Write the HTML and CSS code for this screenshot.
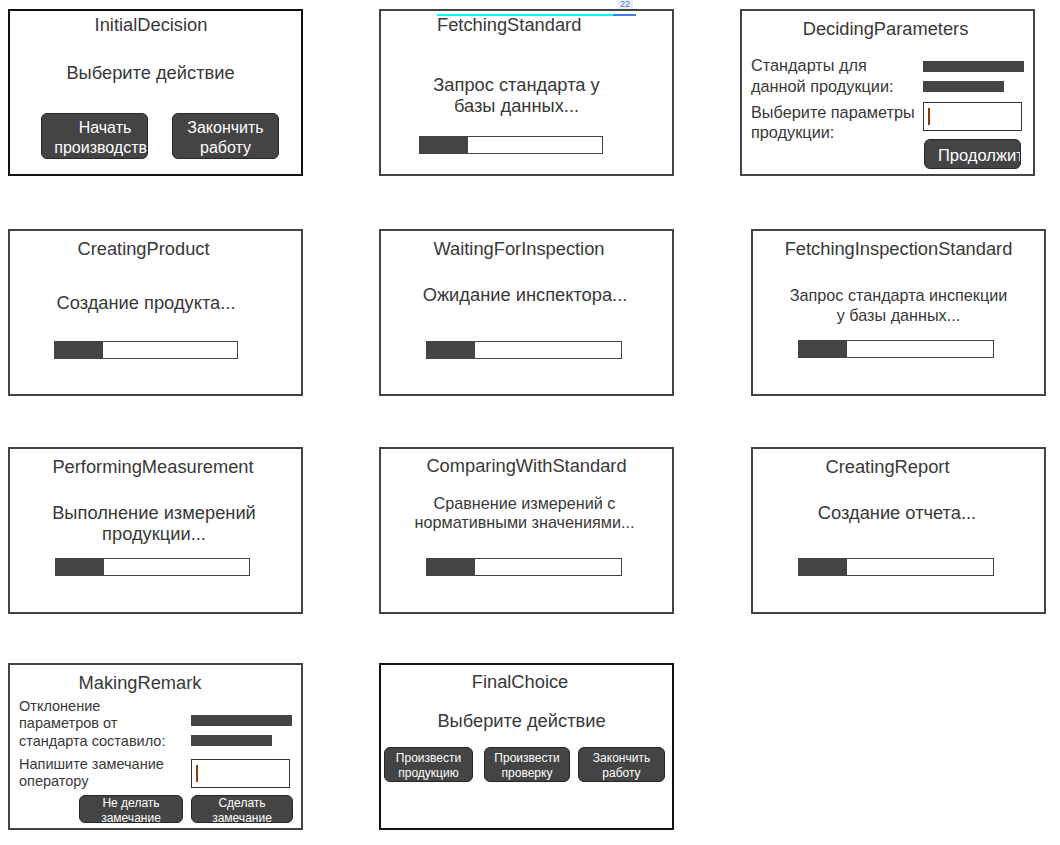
FILE: index.html
```html
<!DOCTYPE html>
<html lang="ru">
<head>
<meta charset="utf-8">
<title>States</title>
<link rel="stylesheet" href="styles.css">
</head>
<body>
<main class="board">
  <div class="row row-1">
    <section class="card card-dark c-initial">
      <h2 class="title">InitialDecision</h2>
      <p class="text">Выберите действие</p>
      <div class="btns">
        <div class="btn btn-lg"><span class="btn-wide">Начать<br>производство</span></div>
        <div class="btn btn-lg">Закончить<br>работу</div>
      </div>
    </section>
    <section class="card col-2 c-fetch">
      <div class="sel">
        <span class="badge">22</span>
        <h2 class="title">FetchingStandard</h2>
      </div>
      <p class="text">Запрос стандарта у<br>базы данных...</p>
      <div class="bar"><div class="fill"></div></div>
    </section>
    <section class="card col-3a c-params">
      <h2 class="title">DecidingParameters</h2>
      <div class="form">
        <div class="labels">
          <p class="label">Стандарты для<br>данной продукции:</p>
          <p class="label">Выберите параметры<br>продукции:</p>
        </div>
        <div class="fields">
          <div class="ph ph-long"></div>
          <div class="ph ph-short"></div>
          <div class="input"><span class="caret"></span></div>
          <div class="btn btn-cont">Продолжить</div>
        </div>
      </div>
    </section>
  </div>

  <div class="row row-2">
    <section class="card c-create">
      <h2 class="title">CreatingProduct</h2>
      <p class="text">Создание продукта...</p>
      <div class="bar"><div class="fill"></div></div>
    </section>
    <section class="card col-2 c-wait">
      <h2 class="title">WaitingForInspection</h2>
      <p class="text">Ожидание инспектора...</p>
      <div class="bar"><div class="fill"></div></div>
    </section>
    <section class="card col-3b c-fis">
      <h2 class="title">FetchingInspectionStandard</h2>
      <p class="text">Запрос стандарта инспекции<br>у базы данных...</p>
      <div class="bar"><div class="fill"></div></div>
    </section>
  </div>

  <div class="row row-3">
    <section class="card c-measure">
      <h2 class="title">PerformingMeasurement</h2>
      <p class="text">Выполнение измерений<br>продукции...</p>
      <div class="bar"><div class="fill"></div></div>
    </section>
    <section class="card col-2 c-compare">
      <h2 class="title">ComparingWithStandard</h2>
      <p class="text">Сравнение измерений с<br>нормативными значениями...</p>
      <div class="bar"><div class="fill"></div></div>
    </section>
    <section class="card col-3b c-report">
      <h2 class="title">CreatingReport</h2>
      <p class="text">Создание отчета...</p>
      <div class="bar"><div class="fill"></div></div>
    </section>
  </div>

  <div class="row row-4">
    <section class="card c-remark">
      <h2 class="title">MakingRemark</h2>
      <div class="form">
        <div class="labels">
          <p class="label">Отклонение<br>параметров от<br>стандарта составило:</p>
          <p class="label">Напишите замечание<br>оператору</p>
        </div>
        <div class="fields">
          <div class="ph ph-long"></div>
          <div class="ph ph-short"></div>
          <div class="input"><span class="caret"></span></div>
        </div>
      </div>
      <div class="btns">
        <div class="btn btn-sm btn-no">Не делать<br>замечание</div>
        <div class="btn btn-sm btn-yes">Сделать<br>замечание</div>
      </div>
    </section>
    <section class="card card-dark col-2 c-final">
      <h2 class="title">FinalChoice</h2>
      <p class="text">Выберите действие</p>
      <div class="btns">
        <div class="btn btn-f btn-f1">Произвести<br>продукцию</div>
        <div class="btn btn-f btn-f2">Произвести<br>проверку</div>
        <div class="btn btn-f btn-f3">Закончить<br>работу</div>
      </div>
    </section>
  </div>
</main>
</body>
</html>
```

FILE: styles.css
```css
html, body {
  margin: 0;
  padding: 0;
  background: #ffffff;
}

body {
  font-family: "Liberation Sans", Arial, sans-serif;
  color: #383838;
}

.board {
  display: flex;
  flex-direction: column;
  padding-left: 8px;
}

.row {
  display: flex;
  align-items: flex-start;
}

.row-1 { margin-top: 9px; }
.row-2 { margin-top: 53px; }
.row-3 { margin-top: 51px; }
.row-4 { margin-top: 49px; }

.col-2 { margin-left: 76px; }
.col-3a { margin-left: 66px; }
.col-3b { margin-left: 77px; }

.card {
  box-sizing: border-box;
  width: 295px;
  height: 167px;
  border: 2px solid #444444;
  background: #ffffff;
  display: flex;
  flex-direction: column;
  align-items: stretch;
}

.card-dark {
  border-color: #111111;
}

.title {
  margin: 0;
  font-size: 18.3px;
  font-weight: normal;
  line-height: 21px;
  text-align: center;
  color: #383838;
}

.text {
  margin: 0;
  font-size: 18.3px;
  line-height: 21px;
  text-align: center;
  color: #383838;
}

.bar {
  align-self: flex-start;
  box-sizing: border-box;
  height: 18px;
  border: 1px solid #444444;
  background: #ffffff;
}

.fill {
  width: 48px;
  height: 100%;
  background: #444444;
}

.btn {
  box-sizing: border-box;
  background: #444444;
  border: 1px solid #262626;
  border-radius: 6px;
  color: #ffffff;
  text-align: center;
  overflow: hidden;
}

/* InitialDecision */
.c-initial .title { margin-top: 3px; padding-right: 9px; }
.c-initial .text { margin-top: 27px; padding-right: 10px; }
.c-initial .btns {
  display: flex;
  gap: 24px;
  margin-top: 30px;
  margin-left: 31px;
}
.btn-lg {
  width: 107px;
  height: 46px;
  font-size: 16px;
  line-height: 20px;
  padding-top: 4px;
}
.btn-wide {
  display: block;
  width: 126px;
}

/* FetchingStandard */
.sel {
  position: relative;
  align-self: flex-start;
  margin-top: 3px;
  margin-left: 56px;
  width: 199px;
}
.sel::before {
  content: "";
  position: absolute;
  left: 0;
  right: 0;
  top: 0;
  height: 2px;
  background: linear-gradient(90deg, #00ffff 0 176px, #3b7ef0 176px);
}
.sel .title { text-align: left; }
.badge {
  position: absolute;
  left: 180px;
  top: -14px;
  width: 16px;
  height: 9px;
  font-size: 9px;
  line-height: 9px;
  text-align: center;
  color: #3a72e0;
  background: #eef1f6;
}
.c-fetch .text { margin-top: 39px; padding-right: 20px; }
.c-fetch .bar { margin-top: 20px; margin-left: 38px; width: 184px; }

/* DecidingParameters */
.c-params .title { margin-top: 6.5px; padding-right: 4px; }
.form {
  display: flex;
  align-items: flex-start;
}
.labels {
  margin-left: 9px;
  width: 172px;
  flex: none;
}
.label {
  margin: 0;
  color: #383838;
  white-space: nowrap;
}
.fields {
  display: flex;
  flex-direction: column;
  align-items: flex-start;
}
.ph {
  height: 11px;
  background: #444444;
}
.ph-long { width: 101px; }
.ph-short { width: 81px; margin-top: 9px; }
.input {
  box-sizing: border-box;
  width: 99px;
  height: 29px;
  border: 1px solid #333333;
  background: #ffffff;
}
.caret {
  display: block;
  width: 2px;
  height: 17px;
  margin: 5px 0 0 4px;
  background: #8a3b12;
}

.c-params .form { margin-top: 16.5px; }
.c-params .label { font-size: 16.3px; line-height: 20.5px; }
.c-params .label + .label { margin-top: 5.5px; }
.c-params .fields { margin-top: 6px; }
.c-params .input { margin-top: 10px; }
.btn-cont {
  margin-top: 8px;
  margin-left: 1px;
  width: 97px;
  height: 30px;
  padding-left: 13px;
  padding-top: 1px;
  font-size: 16.5px;
  line-height: 28px;
  text-align: left;
  white-space: nowrap;
}

/* CreatingProduct */
.c-create .title { margin-top: 7px; padding-right: 24px; }
.c-create .text { margin-top: 32.5px; padding-right: 19px; }
.c-create .bar { margin-top: 28.5px; margin-left: 44px; width: 184px; }

/* WaitingForInspection */
.c-wait .title { margin-top: 6.5px; padding-right: 15px; }
.c-wait .text { margin-top: 25px; padding-right: 3px; }
.c-wait .bar { margin-top: 36.5px; margin-left: 45px; width: 196px; }

/* FetchingInspectionStandard */
.c-fis .title { margin-top: 6.5px; }
.c-fis .text { font-size: 16.2px; line-height: 20.5px; margin-top: 26.25px; }
.c-fis .bar { margin-top: 14.25px; margin-left: 45px; width: 196px; }

/* PerformingMeasurement */
.c-measure .title { margin-top: 6.5px; padding-right: 5px; }
.c-measure .text { margin-top: 25px; padding-right: 3px; }
.c-measure .bar { margin-top: 14.5px; margin-left: 45px; width: 195px; }

/* ComparingWithStandard */
.c-compare .title { margin-top: 6px; }
.c-compare .text { font-size: 16.2px; line-height: 19px; margin-top: 17.5px; padding-right: 4px; }
.c-compare .bar { margin-top: 26.5px; margin-left: 45px; width: 196px; }

/* CreatingReport */
.c-report .title { margin-top: 6.5px; padding-right: 22px; }
.c-report .text { margin-top: 25px; padding-right: 3px; }
.c-report .bar { margin-top: 35.5px; margin-left: 45px; width: 196px; }

/* MakingRemark */
.c-remark .title { margin-top: 6.5px; padding-right: 31px; }
.c-remark .form { margin-top: 5.5px; }
.c-remark .label { font-size: 14.5px; line-height: 17.3px; }
.c-remark .label + .label { margin-top: 6px; }
.c-remark .fields { margin-top: 17px; }
.c-remark .input { margin-top: 13px; }
.c-remark .btns {
  display: flex;
  gap: 8px;
  margin-top: 4.5px;
  margin-left: 69px;
}
.btn-sm {
  height: 28px;
  font-size: 12px;
  line-height: 15px;
}
.btn-no { width: 104px; }
.btn-yes { width: 102px; }

/* FinalChoice */
.c-final .title { margin-top: 5.5px; padding-right: 13px; }
.c-final .text { margin-top: 18.7px; padding-right: 10px; }
.c-final .btns {
  display: flex;
  margin-top: 15.8px;
  margin-left: 3px;
}
.btn-f {
  height: 35px;
  font-size: 12px;
  line-height: 15px;
  padding-top: 3.5px;
}
.btn-f1 { width: 89px; }
.btn-f2 { width: 86px; margin-left: 11px; }
.btn-f3 { width: 87px; margin-left: 8px; }
```
